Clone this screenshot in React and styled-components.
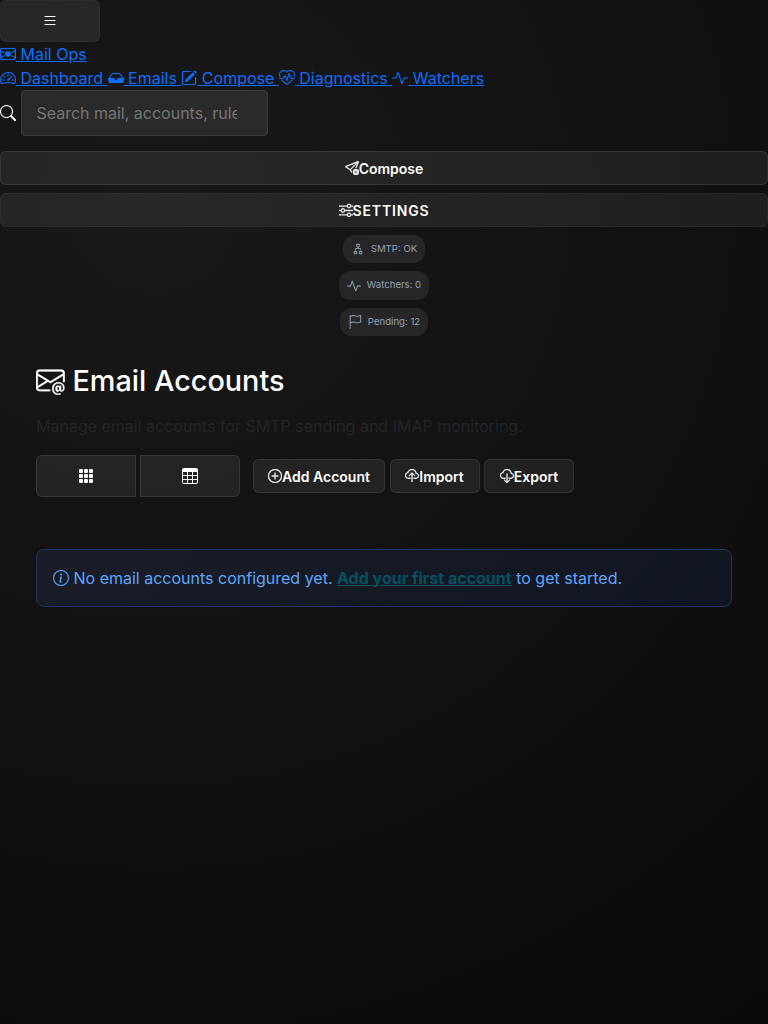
import React from "react";
import styled, { createGlobalStyle } from "styled-components";
import {
  BsList, BsEnvelopeHeart, BsSpeedometer2, BsInboxFill, BsPencilSquare, BsHeartPulse,
  BsActivity, BsSearch, BsSendPlus, BsSliders, BsDiagram2, BsFlag, BsEnvelopeAt,
  BsGrid3X3GapFill, BsTable, BsPlusCircle, BsCloudUpload, BsCloudDownload, BsInfoCircle,
} from "react-icons/bs";

const GlobalStyle = createGlobalStyle`
  *, *::before, *::after { box-sizing: border-box; }
  body {
    margin: 0;
    min-height: 100vh;
    background: radial-gradient(circle at 20% 20%, #181818 0%, #0a0a0a 100%);
    color: #fff;
    font-family: Inter, sans-serif;
    font-size: 16px;
    line-height: 24px;
  }
  svg { display: inline-block; vertical-align: -0.125em; flex-shrink: 0; stroke-width: 0.15px; }
`;

const Button = styled.button`
  display: inline-flex;
  align-items: center;
  justify-content: center;
  height: 34px;
  width: ${(p) => p.$width || "auto"};
  padding: 1px 14px 0;
  border: 1px solid rgba(255, 255, 255, 0.14);
  border-radius: 6px;
  background: rgba(255, 255, 255, 0.065);
  background-clip: padding-box;
  color: #fff;
  font: 600 14px/21px Inter, sans-serif;
  svg { stroke-width: 0.4px; }
`;

const SquareButton = styled(Button)`
  width: 100px;
  height: 42px;
  padding: 0;
  font-size: 16px;
  border-radius: ${(p) => p.$radius || "6px"};
  svg { stroke-width: 0; }
`;

const MenuButton = styled(SquareButton)`
  border-color: rgba(255, 255, 255, 0.1);
  background-color: rgba(255, 255, 255, 0.08);
  svg { transform: translateY(-0.5px); }
`;

const WideButton = styled(Button)`
  width: 100%;
  padding-top: 0;
  border-color: ${(p) => p.$border || "rgba(255, 255, 255, 0.14)"};
  letter-spacing: ${(p) => p.$spacing || "normal"};
`;

const TopBar = styled.header`
  display: flex;
  flex-direction: column;
  align-items: flex-start;
`;

const Link = styled.a`
  color: #0d6efd;
  text-decoration: underline;
`;

const Nav = styled.nav`
  height: 24px;
  white-space: nowrap;
`;

const Search = styled.div`
  display: flex;
  align-items: center;
  gap: 5px;
`;

const SearchInput = styled.input`
  width: 247px;
  height: 46px;
  padding: 0 30px 0 14.4px;
  border: 1px solid #3a3a3a;
  border-radius: 4px;
  background: #2a2a2a;
  color: #fff;
  font: 400 16px/24px Inter, sans-serif;
  &::placeholder { color: #757575; opacity: 1; }
`;

const Actions = styled.div`
  display: flex;
  flex-direction: column;
  align-items: center;
  gap: 8px;
  width: 100%;
  padding-top: 15px;
`;

const Pill = styled.span`
  display: flex;
  align-items: center;
  gap: 6px;
  height: 28.4px;
  padding: 0 8px;
  border-radius: 12px;
  background: #262626;
  color: #94a3b8;
  font-size: 9.6px;
  line-height: 14.4px;
`;

const Main = styled.main`
  padding: 28px 36px;
`;

const Title = styled.h1`
  margin: 0 0 16px;
  font-size: 28.8px;
  font-weight: 550;
  line-height: 34px;
`;

const Subtitle = styled.p`
  margin: 0 0 16.8px;
  color: #212529;
`;

const Toolbar = styled.div`
  display: flex;
  align-items: center;
  gap: ${(p) => p.$gap}px;
`;

const Notice = styled.div`
  margin-top: 52px;
  height: 58px;
  padding: 16px;
  border: 1px solid #1c335f;
  border-radius: 8px;
  background: linear-gradient(135deg, #181d27, #101622);
  color: #60a5fa;
`;

const NoticeLink = styled.a`
  color: #055160;
  font-weight: 700;
  text-decoration: underline;
`;

const links = [
  [BsSpeedometer2, "Dashboard"],
  [BsInboxFill, "Emails"],
  [BsPencilSquare, "Compose"],
  [BsHeartPulse, "Diagnostics"],
  [BsActivity, "Watchers"],
];

export default function App() {
  return (
    <>
      <GlobalStyle />
      <TopBar>
        <MenuButton aria-label="Menu"><BsList /></MenuButton>
        <Link href="#"><BsEnvelopeHeart /> Mail Ops</Link>
        <Nav>
          {links.map(([Icon, label], i) => (
            <Link href="#" key={label}><Icon /> {label}{i < links.length - 1 ? " " : ""}</Link>
          ))}
        </Nav>
        <Search>
          <BsSearch />
          <SearchInput placeholder="Search mail, accounts, rules..." />
        </Search>
        <Actions>
          <WideButton><BsSendPlus />Compose</WideButton>
          <WideButton $spacing="0.84px" $border="rgba(255, 255, 255, 0.1)"><BsSliders />SETTINGS</WideButton>
          <Pill><BsDiagram2 size={14} />SMTP: OK</Pill>
          <Pill><BsActivity size={14} />Watchers: 0</Pill>
          <Pill><BsFlag size={14} />Pending: 12</Pill>
        </Actions>
      </TopBar>
      <Main>
        <Title><BsEnvelopeAt /> Email Accounts</Title>
        <Subtitle>Manage email accounts for SMTP sending and IMAP monitoring.</Subtitle>
        <Toolbar $gap={13}>
          <Toolbar $gap={4}>
            <SquareButton $radius="6px 0 0 6px" aria-label="Grid view"><BsGrid3X3GapFill /></SquareButton>
            <SquareButton $radius="0 6px 6px 0" aria-label="Table view"><BsTable /></SquareButton>
          </Toolbar>
          <Toolbar $gap={4.5}>
            <Button $width="132px"><BsPlusCircle />Add Account</Button>
            <Button $width="90px"><BsCloudUpload />Import</Button>
            <Button $width="90px"><BsCloudDownload />Export</Button>
          </Toolbar>
        </Toolbar>
        <Notice>
          <BsInfoCircle /> No email accounts configured yet. <NoticeLink href="#">Add your first account</NoticeLink> to get started.
        </Notice>
      </Main>
    </>
  );
}
